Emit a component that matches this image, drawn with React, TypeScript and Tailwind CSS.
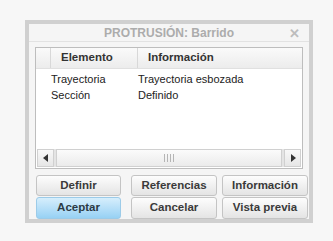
import React from "react";

const btn =
  "h-[21px] rounded-[3px] border border-[#c4c4c4] bg-gradient-to-b from-[#fdfdfd] to-[#e4e4e4] text-[11.5px] font-bold text-[#3a3a3a] flex items-center justify-center leading-none";
const blueBtn =
  "h-[22px] rounded-[3px] border border-[#9ccbe8] bg-gradient-to-b from-[#d6eefc] to-[#97d1f4] text-[11.5px] font-bold text-[#2c3a44] flex items-center justify-center leading-none";

export default function App() {
  return (
    <div
      className="w-[333px] h-[241px] bg-[#f7f7f7] pt-[20px] pl-[25px]"
      style={{ fontFamily: "Arial, 'Liberation Sans', sans-serif" }}
    >
      <div className="w-[288px] h-[203px] border-4 border-[#d0d0d0] bg-[#f5f5f5] flex flex-col">
        <div className="relative h-[18px] border-b border-[#e2e2e2] flex items-center justify-center pt-[1px]">
          <span className="text-[12px] font-bold text-[#acacac] leading-none">PROTRUSIÓN: Barrido</span>
          <span className="absolute right-[9px] top-[3px] text-[13px] font-bold text-[#bdbdbd] leading-none">✕</span>
        </div>
        <div className="ml-[6px] mt-[5px] w-[268px] h-[122px] border border-[#bdbdbd] bg-white flex flex-col">
          <div className="h-[21px] flex border-b border-[#e0e0e0] bg-gradient-to-b from-[#fafafa] to-[#ececec] text-[11.5px] font-bold text-[#333]">
            <div className="w-[15px] border-r border-[#d8d8d8]" />
            <div className="w-[87px] border-r border-[#d8d8d8] flex items-center pl-[10px]">Elemento</div>
            <div className="flex-1 flex items-center pl-[10px]">Información</div>
          </div>
          <div className="flex-1 pt-[2px] text-[11px] text-[#222] leading-[16px]">
            <div className="flex">
              <div className="w-[102px] pl-[15px]">Trayectoria</div>
              <div>Trayectoria esbozada</div>
            </div>
            <div className="flex">
              <div className="w-[102px] pl-[15px]">Sección</div>
              <div>Definido</div>
            </div>
          </div>
          <div className="h-[18px] mx-[1px] mb-[1px] flex gap-[2px] bg-[#e4e4e4]">
            <div className="w-[17px] bg-gradient-to-b from-[#f8f8f8] to-[#e6e6e6] border border-[#d0d0d0] flex items-center justify-center">
              <svg width="6" height="8" viewBox="0 0 6 8"><path d="M5 0 L0 4 L5 8 Z" fill="#333" /></svg>
            </div>
            <div className="flex-1 border border-[#d0d0d0] bg-gradient-to-b from-[#fbfbfb] to-[#ebebeb] flex items-center justify-center">
              <svg width="10" height="8" viewBox="0 0 10 8">
                <path d="M0.5 0v8M3.5 0v8M6.5 0v8M9.5 0v8" stroke="#b5b5b5" strokeWidth="1" />
              </svg>
            </div>
            <div className="w-[17px] bg-gradient-to-b from-[#f8f8f8] to-[#e6e6e6] border border-[#d0d0d0] flex items-center justify-center">
              <svg width="6" height="8" viewBox="0 0 6 8"><path d="M1 0 L6 4 L1 8 Z" fill="#333" /></svg>
            </div>
          </div>
        </div>
        <div className="ml-[7px] mt-[6px] flex flex-col gap-[1px]">
          <div className="flex">
            <div className={`${btn} w-[85px]`}>Definir</div>
            <div className={`${btn} w-[86px] ml-[10px]`}>Referencias</div>
            <div className={`${btn} w-[86px] ml-[5px]`}>Información</div>
          </div>
          <div className="flex">
            <div className={`${blueBtn} w-[85px]`}>Aceptar</div>
            <div className={`${btn} h-[22px] w-[86px] ml-[10px]`}>Cancelar</div>
            <div className={`${btn} h-[22px] w-[86px] ml-[5px]`}>Vista previa</div>
          </div>
        </div>
      </div>
    </div>
  );
}
